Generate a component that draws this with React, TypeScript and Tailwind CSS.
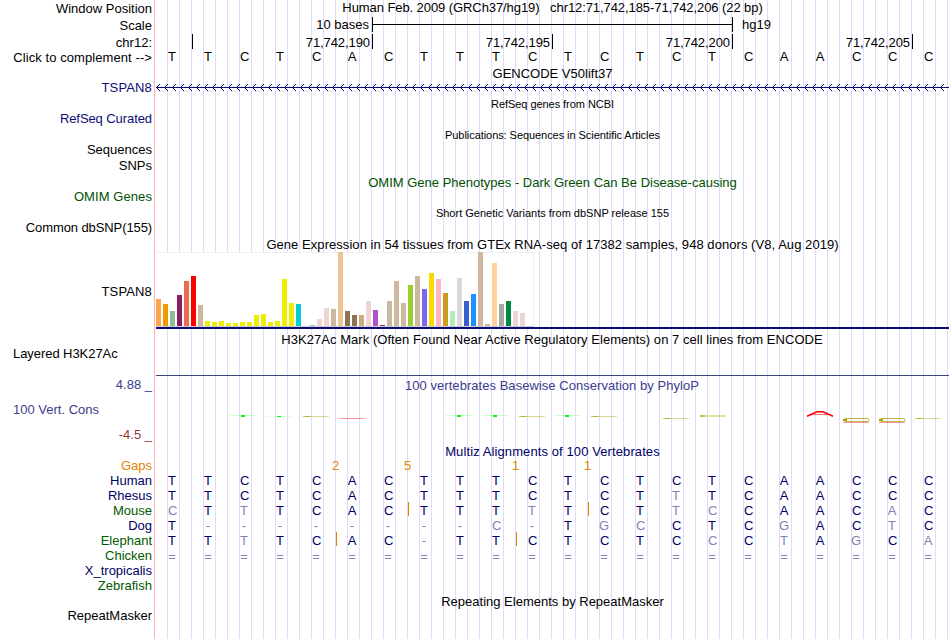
import React from "react";

type LabelDef = { text: string; cls: string };

const labels: LabelDef[] = [
  { text: "Window Position", cls: "mt-px text-right text-black" },
  { text: "Scale", cls: "mt-0.5 text-right text-black" },
  { text: "chr12:", cls: "mt-0.5 text-right text-black" },
  { text: "Click to complement -->", cls: "text-right text-black tracking-[0.08px]" },
  { text: "TSPAN8", cls: "mt-[15px] text-right text-[#0c0c78] tracking-[0.15px]" },
  { text: "RefSeq Curated", cls: "mt-4 text-right text-[#0c0c78] tracking-[-0.08px]" },
  { text: "Sequences", cls: "mt-4 text-right text-black" },
  { text: "SNPs", cls: "mt-px text-right text-black" },
  { text: "OMIM Genes", cls: "mt-4 text-right text-[#005000] tracking-[0.08px]" },
  { text: "Common dbSNP(155)", cls: "mt-4 text-right text-black tracking-[-0.1px]" },
  { text: "TSPAN8", cls: "mt-[49px] text-right text-black tracking-[0.15px]" },
  { text: "Layered H3K27Ac", cls: "mt-[47px] pl-[13px] text-black tracking-[-0.06px]" },
  { text: "4.88 _", cls: "mt-4 text-right text-[#3c3c8c]" },
  { text: "100 Vert. Cons", cls: "mt-2.5 pl-[13px] text-[#3c3c8c]" },
  { text: "-4.5 _", cls: "mt-2.5 text-right text-[#8c3c3c]" },
  { text: "Gaps", cls: "mt-4 text-right text-[#e68200]" },
  { text: "Human", cls: "text-right text-[#000064]" },
  { text: "Rhesus", cls: "text-right text-[#000064]" },
  { text: "Mouse", cls: "text-right text-[#005a00]" },
  { text: "Dog", cls: "text-right text-[#000064]" },
  { text: "Elephant", cls: "text-right text-[#005a00]" },
  { text: "Chicken", cls: "text-right text-[#005a00]" },
  { text: "X_tropicalis", cls: "text-right text-[#000064]" },
  { text: "Zebrafish", cls: "text-right text-[#005a00]" },
  { text: "RepeatMasker", cls: "mt-[15px] text-right text-black" },
];

const reference = "TTCTCACTTTCTCTCTCAACCC";

// Lower case marks a base that differs from the human sequence.
const alignments: { species: string; bases: string; inserts: number[] }[] = [
  { species: "Human", bases: reference, inserts: [] },
  { species: "Rhesus", bases: "TTCTCACTTTCTCTtTCAACCC", inserts: [] },
  { species: "Mouse", bases: "cTtTCACTTTtTCTtcCAACaC", inserts: [7, 12] },
  { species: "Dog", bases: "T--------c-TgcCTCgACtC", inserts: [] },
  { species: "Elephant", bases: "TTtTCAC-TTCTCTCcCtAgCa", inserts: [5, 10] },
  { species: "Chicken", bases: "======================", inserts: [] },
];

const gaps: Record<number, string> = { 5: "2", 7: "5", 10: "1", 12: "1" };

const tissues: [number, string][] = [
  [27, "#ffa54f"], [22, "#ee9a00"], [15, "#8fbc8f"], [31, "#8b1c62"], [45, "#ee6a50"], [50, "#ff0000"],
  [21, "#cdb79e"], [5, "#eeee00"], [4, "#eeee00"], [5, "#eeee00"], [3, "#eeee00"], [3, "#eeee00"],
  [4, "#eeee00"], [4, "#eeee00"], [11, "#eeee00"], [12, "#eeee00"], [4, "#eeee00"], [5, "#eeee00"],
  [47, "#eeee00"], [23, "#eeee00"], [22, "#00cdcd"], [0, "#ee82ee"], [1, "#9ac0cd"], [7, "#eed5d2"],
  [18, "#eed5d2"], [17, "#cdb79e"], [74, "#eec591"], [15, "#8b7355"], [11, "#8b7355"], [11, "#cdaa7d"],
  [25, "#eed5d2"], [16, "#b452cd"], [1, "#7a378b"], [25, "#cdb79e"], [45, "#cdb79e"], [23, "#cdb79e"],
  [41, "#9acd32"], [50, "#cdb79e"], [37, "#7a67ee"], [53, "#ffd700"], [47, "#ffb6c1"], [33, "#cd9b1d"],
  [15, "#b4eeb4"], [48, "#d9d9d9"], [25, "#3a5fcd"], [32, "#1e90ff"], [74, "#cdb79e"], [2, "#cdb79e"],
  [63, "#ffd39b"], [22, "#a6a6a6"], [25, "#008b45"], [15, "#eed5d2"], [13, "#eed5d2"], [0, "#ff00ff"],
];

function Title({ children, className }: { children: React.ReactNode; className: string }) {
  return <div className={"text-center whitespace-pre " + className}>{children}</div>;
}

function Bases({ bases, inserts = [], color }: { bases: string; inserts?: number[]; color: string }) {
  return (
    <div className="-ml-px flex h-[15px]">
      {bases.split("").map((b, i) => {
        const faded = b === "-" || b === "=" || b !== b.toUpperCase();
        const nudge = b === "=" ? " pt-px" : b.toUpperCase() === "C" ? " pl-[1.5px]" : "";
        return (
          <span
            key={i}
            className={"relative w-9 shrink-0 text-center " + (faded ? "text-[#8282b4]" : color) + nudge}
          >
            {b.toUpperCase()}
            {inserts.includes(i) && <i className="absolute top-[-1px] left-[2px] h-3.5 w-px bg-[#e68200]" />}
          </span>
        );
      })}
    </div>
  );
}

function GeneLine() {
  return (
    <svg className="mt-[3px] block" width="795" height="7" shapeRendering="crispEdges">
      <rect x="1" y="3" width="793" height="1" fill="#0c0c78" />
      {Array.from({ length: 99 }, (_, i) => {
        const x = 2 + i * 8;
        return (
          <g key={i} fill="#0c0c78">
            <rect x={x} y="2" width="1" height="3" />
            <rect x={x + 1} y="1" width="1" height="1" />
            <rect x={x + 1} y="5" width="1" height="1" />
            <rect x={x + 2} y="0" width="1" height="1" />
            <rect x={x + 2} y="6" width="1" height="1" />
          </g>
        );
      })}
    </svg>
  );
}

function Conservation() {
  const t: [number, number, number][] = [[75, 15, 2], [111, 16, 1], [291, 15, 2], [327, 15, 2], [399, 15, 2]];
  const c: [number, number][] = [[148, 16], [364, 16], [436, 16], [508, 18], [760, 18]];
  return (
    <svg className="mt-[7px] block" width="795" height="28">
      <defs>
        <linearGradient id="olive">
          <stop offset="0" stopColor="#a8a000" stopOpacity="0.45" />
          <stop offset="0.15" stopColor="#a8a000" stopOpacity="0.9" />
          <stop offset="0.35" stopColor="#a8a000" stopOpacity="0.4" />
          <stop offset="0.8" stopColor="#a8a000" stopOpacity="0.5" />
          <stop offset="1" stopColor="#a8a000" stopOpacity="0.15" />
        </linearGradient>
      </defs>
      {t.map(([x, y, h]) => (
        <g key={x}>
          <rect x={x} y={y} width="26" height="1" fill="#00ff00" opacity={h === 2 ? 0.2 : 0.12} />
          <rect x={x + 11} y={y} width="4" height={h} fill="#00ff00" />
        </g>
      ))}
      {c.map(([x, y]) => (
        <rect key={x} x={x} y={y} width="27" height="1" fill="url(#olive)" />
      ))}
      <rect x="183" y="18" width="28" height="1" fill="#ff0000" opacity="0.3" />
      <rect x="187" y="18" width="20" height="1" fill="#ff0000" opacity="0.2" />
      <rect x="545" y="15" width="26" height="2" rx="1" fill="#a8a000" opacity="0.35" />
      <rect x="545" y="15" width="5" height="2" fill="#a8a000" opacity="0.5" />
      <path d="M652 16.2 L662 11.7 H668 L678 16.2" fill="none" stroke="#ff0000" strokeWidth="1.5" strokeLinejoin="round" />
      <path d="M658 14.5 H672" stroke="#ff0000" strokeWidth="0.9" opacity="0.6" />
      {[688, 724].map((x) => (
        <g key={x}>
          <rect x={x + 1} y="18.5" width="25" height="3" rx="1.5" fill="none" stroke="#a8a000" strokeWidth="1" opacity="0.75" />
          <rect x={x} y="19" width="4" height="2" fill="#a8a000" />
          <rect x={x} y="22" width="26" height="1" fill="#ff0000" opacity="0.4" />
        </g>
      ))}
    </svg>
  );
}

export default function App() {
  return (
    <main className="flex h-[639px] w-[950px] overflow-hidden bg-white font-['Liberation_Sans',Arial,sans-serif] text-[13px] leading-[15px]">
      <aside className="w-[154px] shrink-0 pr-[2px]">
        {labels.map((l, i) => (
          <div key={i} className={"h-[15px] whitespace-nowrap " + l.cls}>
            {l.text}
          </div>
        ))}
      </aside>
      <div className="w-px shrink-0 bg-[#ffb4b4]" />
      <section className="w-[795px] shrink-0 bg-[repeating-linear-gradient(to_right,#dcdcff_0px,#dcdcff_1px,transparent_1px,transparent_12px)] bg-[position:12px_0px] bg-no-repeat">
        <Title className="h-[15px] tracking-[-0.08px]">
          {"Human Feb. 2009 (GRCh37/hg19)   chr12:71,742,185-71,742,206 (22 bp)"}
        </Title>

        <div className="mt-0.5 flex h-[15px]">
          <span className="w-[217px] pr-[3px] text-right">10 bases</span>
          <span className="flex w-[361px] items-center border-x border-black">
            <i className="h-px w-full bg-black" />
          </span>
          <span className="pl-[9px]">hg19</span>
        </div>

        <div className="mt-0.5 flex h-[15px]">
          <span className="w-[38px] border-r border-black" />
          {["71,742,190", "71,742,195", "71,742,200", "71,742,205"].map((p) => (
            <span key={p} className="w-[180px] border-r border-black pt-px pr-[2px] text-right tracking-[-0.08px]">
              {p}
            </span>
          ))}
        </div>

        <Bases bases={reference} color="text-black" />

        <Title className="mt-0.5 h-[15px]">GENCODE V50lift37</Title>
        <GeneLine />
        <Title className="mt-[7px] h-[13px] text-[11px] leading-[13px] tracking-[-0.05px]">RefSeq genes from NCBI</Title>
        <Title className="mt-[18px] h-[13px] text-[11px] leading-[13px] tracking-[-0.06px]">
          Publications: Sequences in Scientific Articles
        </Title>
        <Title className="mt-[33px] h-[15px] text-[#005000]">OMIM Gene Phenotypes - Dark Green Can Be Disease-causing</Title>
        <Title className="mt-[17px] h-[13px] text-[11px] leading-[13px]">Short Genetic Variants from dbSNP release 155</Title>
        <Title className="mt-[17px] h-[15px] tracking-[0.055px]">
          Gene Expression in 54 tissues from GTEx RNA-seq of 17382 samples, 948 donors (V8, Aug 2019)
        </Title>

        <div className="ml-px flex h-[75px] w-[378px] items-end gap-0.5 border-b border-[#cccccc] bg-white shadow-[inset_0_1px_0_#f0f0f0,inset_-1px_0_0_#f0f0f0]">
          {tissues.map(([h, color], i) => (
            <i key={i} className="w-[5px] shrink-0" style={{ height: h, backgroundColor: color }} />
          ))}
        </div>
        <div className="ml-px h-0.5 w-[793px] bg-[#0c0c78]" />

        <Title className="mt-[3px] h-[15px] pr-px tracking-[0.045px]">
          H3K27Ac Mark (Often Found Near Active Regulatory Elements) on 7 cell lines from ENCODE
        </Title>
        <div className="mt-7 ml-px h-px w-[793px] bg-[#3c4678]" />
        <Title className="mt-[2px] h-[15px] pr-px tracking-[0.04px] text-[#3c3c8c]">
          100 vertebrates Basewise Conservation by PhyloP
        </Title>
        <Conservation />

        <Title className="mt-4 h-[15px] tracking-[0.1px] text-[#000064]">Multiz Alignments of 100 Vertebrates</Title>
        <div className="-mt-px ml-[18.5px] flex h-[15px] text-[#e68200]">
          {Array.from({ length: 21 }, (_, i) => (
            <span key={i} className="w-9 shrink-0 text-center">
              {gaps[i + 1] ?? ""}
            </span>
          ))}
        </div>
        {alignments.map((a) => (
          <Bases key={a.species} bases={a.bases} inserts={a.inserts} color="text-[#000064]" />
        ))}

        <Title className="mt-[31px] h-[15px]">Repeating Elements by RepeatMasker</Title>
      </section>
    </main>
  );
}
